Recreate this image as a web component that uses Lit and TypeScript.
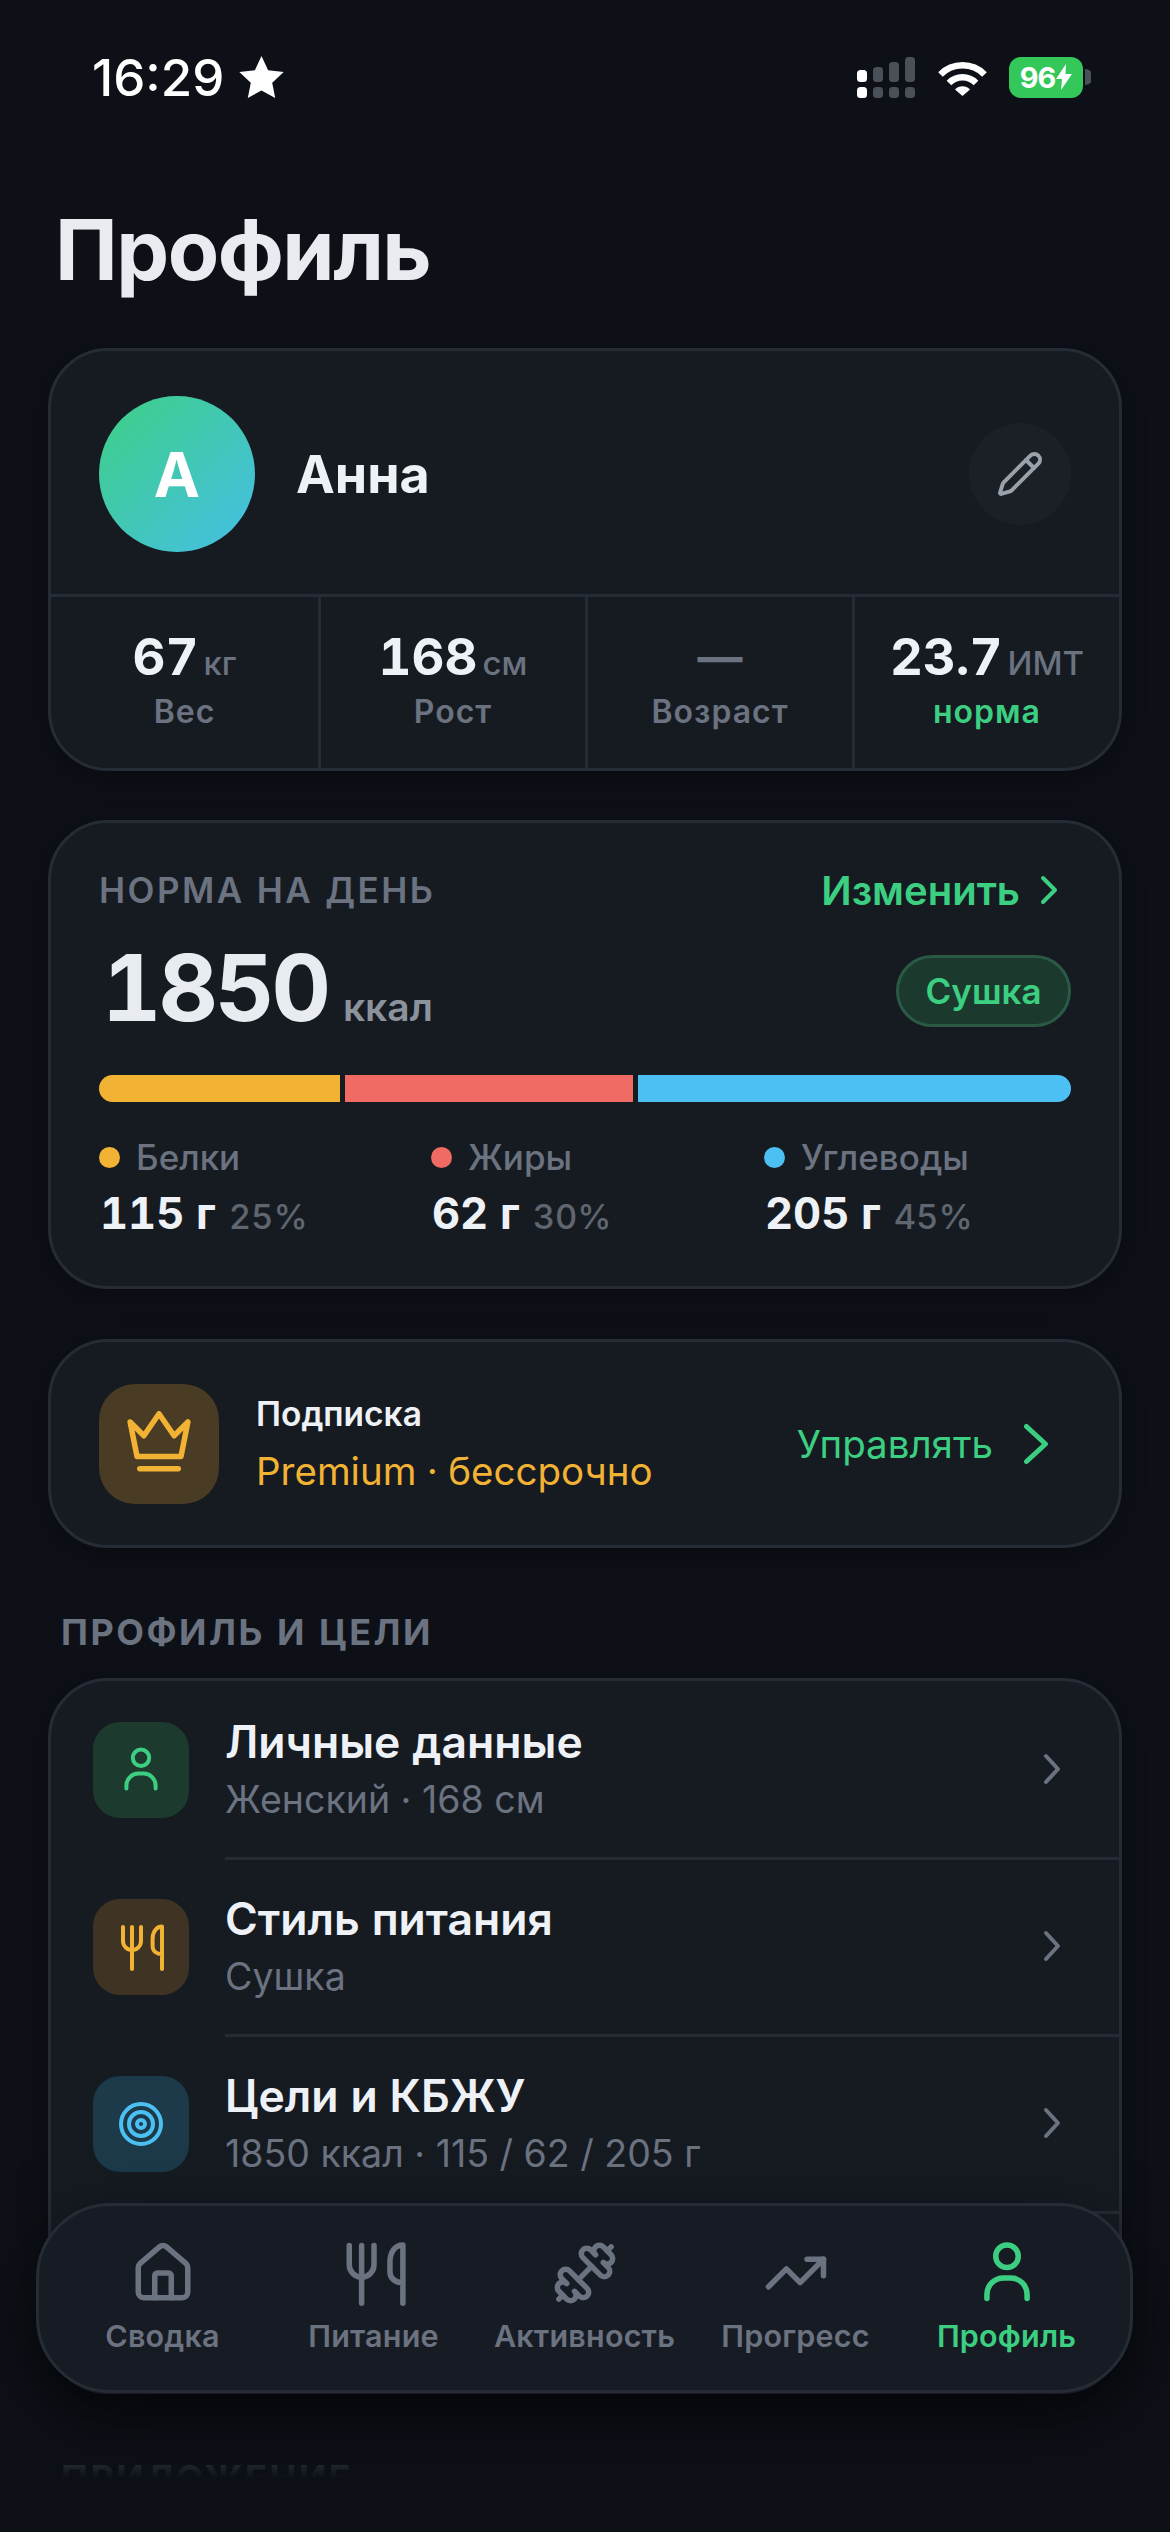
import { LitElement, html, svg, css } from 'lit';
import { customElement } from 'lit/decorators.js';

const stats = [
  { value: '67', unit: 'кг', label: 'Вес' },
  { value: '168', unit: 'см', label: 'Рост' },
  { value: '—', unit: '', label: 'Возраст', empty: true },
  { value: '23.7', unit: 'ИМТ', label: 'норма', good: true },
];

const macros = [
  { name: 'Белки', amount: '115 г', pct: 25, color: '#f2b233' },
  { name: 'Жиры', amount: '62 г', pct: 30, color: '#ef6b64' },
  { name: 'Углеводы', amount: '205 г', pct: 45, color: '#4cc0f2' },
];

const userIcon = svg`<circle cx="12" cy="5.9" r="4.1" /><path d="M4.7 21.3v-1.5a6 6 0 0 1 6-6h2.6a6 6 0 0 1 6 6v1.5" />`;
const foodIcon = svg`<path d="M3 2v7a4.5 4.5 0 0 0 9 0V2" /><path d="M7.5 2v21" /><path d="M22.5 23V1.800c-2.800 0-4.700 2.600-4.700 6.200v3.600c0 2.400 2 3.900 4.700 3.900" />`;
const targetIcon = svg`<circle cx="12" cy="12" r="10" /><circle cx="12" cy="12" r="6" /><circle cx="12" cy="12" r="2" />`;
const homeIcon = svg`<path d="M15 21v-8a1 1 0 0 0-1-1h-4a1 1 0 0 0-1 1v8" /><path d="M3 10a2 2 0 0 1 .709-1.528l7-5.999a2 2 0 0 1 2.582 0l7 5.999A2 2 0 0 1 21 10v9a2 2 0 0 1-2 2H5a2 2 0 0 1-2-2z" />`;
const dumbbellIcon = svg`<g transform="matrix(-1 0 0 1 24 0)"><path d="M14.4 14.4 9.6 9.6" /><path d="M18.657 21.485a2 2 0 1 1-2.829-2.828l-1.767 1.768a2 2 0 1 1-2.829-2.829l6.364-6.364a2 2 0 1 1 2.829 2.829l-1.768 1.767a2 2 0 1 1 2.828 2.829z" /><path d="m21.5 21.5-1.4-1.4" /><path d="M3.9 3.9 2.5 2.5" /><path d="M6.404 12.768a2 2 0 1 1-2.829-2.829l1.768-1.767a2 2 0 1 1-2.828-2.829l2.828-2.828a2 2 0 1 1 2.829 2.828l1.767-1.768a2 2 0 1 1 2.829 2.829z" /></g>`;
const trendIcon = svg`<path d="M22 7 13.5 15.5 8.5 10.5 2 17" /><path d="M16 7h6v6" />`;

const rows = [
  { title: 'Личные данные', sub: 'Женский · 168 см', tone: 'green', icon: userIcon },
  { title: 'Стиль питания', sub: 'Сушка', tone: 'amber', icon: foodIcon },
  { title: 'Цели и КБЖУ', sub: '1850 ккал · 115 / 62 / 205 г', tone: 'blue', icon: targetIcon },
];

const tabs = [
  { label: 'Сводка', icon: homeIcon },
  { label: 'Питание', icon: foodIcon },
  { label: 'Активность', icon: dumbbellIcon },
  { label: 'Прогресс', icon: trendIcon },
  { label: 'Профиль', icon: userIcon, active: true },
];

@customElement('app-root')
export class AppRoot extends LitElement {
  static styles = css`
    :host {
      display: block;
      position: relative;
      width: 1170px;
      height: 2532px;
      overflow: hidden;
      background: #0d1017;
      font-family: Inter, 'Noto Sans', sans-serif;
      font-variant-numeric: tabular-nums;
      color: #eef1f5;
    }
    .ic {
      display: block;
      fill: none;
      stroke: currentColor;
      stroke-width: 2;
      stroke-linecap: round;
      stroke-linejoin: round;
    }

    .status {
      display: flex;
      align-items: center;
      justify-content: space-between;
      height: 154px;
      padding: 0 79px 0 92px;
    }
    .time {
      display: flex;
      align-items: center;
      gap: 14px;
      font-size: 51px;
      font-weight: 500;
      font-variant-numeric: normal;
      color: #fff;
    }
    .indicators {
      display: flex;
      align-items: center;
      gap: 22px;
    }
    .battery {
      display: flex;
      align-items: center;
      gap: 2px;
    }
    .cell {
      display: flex;
      align-items: center;
      justify-content: center;
      gap: 1px;
      width: 74px;
      height: 41px;
      border-radius: 12px;
      background: #34c759;
      font-size: 29px;
      font-weight: 700;
      letter-spacing: -1px;
      color: #fff;
    }

    .content {
      padding: 0 48px;
    }
    h1 {
      margin: 46px 0 48px 7px;
      font-size: 84px;
      line-height: 100px;
      font-weight: 700;
      letter-spacing: -1.5px;
      color: #e8ebf0;
    }
    .card {
      border: 3px solid #262c36;
      border-radius: 60px;
      background: #161b22;
      box-shadow: 0 6px 24px rgba(0, 0, 0, 0.3);
    }

    .who {
      display: flex;
      align-items: center;
      padding: 45px 48px 42px;
      border-bottom: 3px solid #262c36;
    }
    .avatar {
      display: flex;
      align-items: center;
      justify-content: center;
      width: 156px;
      height: 156px;
      border-radius: 50%;
      background: linear-gradient(135deg, #3ecf85, #45bfe6);
      font-size: 62px;
      font-weight: 700;
      color: #fff;
    }
    .name {
      flex: 1;
      margin-left: 41px;
      font-size: 52px;
      font-weight: 700;
    }
    .edit {
      display: flex;
      align-items: center;
      justify-content: center;
      width: 102px;
      height: 102px;
      border-radius: 50%;
      background: #1b2027;
      color: #9aa1aa;
    }
    .stats {
      display: grid;
      grid-template-columns: repeat(4, 1fr);
    }
    .stat {
      display: flex;
      flex-direction: column;
      align-items: center;
      gap: 8px;
      height: 171px;
      padding-top: 33px;
      box-sizing: border-box;
      border-left: 3px solid #262c36;
    }
    .stat:first-child {
      border-left: 0;
    }
    .stat-value {
      display: flex;
      align-items: baseline;
      gap: 5px;
      height: 54px;
      font-size: 51px;
      line-height: 54px;
      font-weight: 700;
    }
    .stat-value.empty {
      font-size: 45px;
      color: #6b7280;
    }
    .stat-unit {
      font-size: 33px;
      font-weight: 500;
      color: #6b7280;
    }
    .stat-label {
      font-size: 32px;
      line-height: 40px;
      font-weight: 600;
      letter-spacing: 1px;
      color: #6b7280;
    }
    .stat-label.good {
      color: #3ccf82;
    }

    .norm {
      margin-top: 49px;
      padding: 42px 48px 48px;
    }
    .norm-head {
      display: flex;
      align-items: center;
      justify-content: space-between;
      height: 50px;
    }
    .caption {
      font-size: 35px;
      line-height: 44px;
      font-weight: 600;
      letter-spacing: 2.5px;
      color: #6b7280;
    }
    .change {
      display: flex;
      align-items: center;
      gap: 20px;
      margin-right: 13px;
      font-size: 40px;
      font-weight: 600;
      color: #3ccf82;
    }
    .kcal-row {
      display: flex;
      align-items: center;
      justify-content: space-between;
      margin-top: 40px;
      height: 72px;
    }
    .kcal {
      display: flex;
      align-items: baseline;
      gap: 15px;
      height: 72px;
      margin: -6px 0 0 3px;
      font-size: 92px;
      line-height: 72px;
      font-weight: 700;
      letter-spacing: -3px;
      color: #e8ebf0;
    }
    .kcal span {
      font-size: 39px;
      font-weight: 600;
      letter-spacing: 0;
      color: #8b929c;
    }
    .pill {
      display: flex;
      align-items: center;
      justify-content: center;
      width: 175px;
      height: 72px;
      box-sizing: border-box;
      border: 3px solid #2a5a45;
      border-radius: 36px;
      background: #1b3a2d;
      font-size: 35px;
      font-weight: 600;
      color: #3ccf82;
    }
    .bar {
      display: flex;
      gap: 5px;
      height: 27px;
      margin-top: 48px;
      border-radius: 14px;
      overflow: hidden;
    }
    .legend {
      display: grid;
      grid-template-columns: 332px 333px 1fr;
      margin-top: 33px;
    }
    .macro-name {
      display: flex;
      align-items: center;
      gap: 16px;
      font-size: 35px;
      line-height: 44px;
      font-weight: 500;
      color: #6b7280;
    }
    .dot {
      width: 21px;
      height: 21px;
      border-radius: 50%;
    }
    .macro-value {
      display: flex;
      align-items: baseline;
      gap: 13px;
      height: 50px;
      margin: 9px 0 0 1px;
      font-size: 43.5px;
      line-height: 50px;
      font-weight: 700;
    }
    .macro-value span {
      font-size: 34.5px;
      font-weight: 500;
      color: #5f6670;
    }

    .sub-card {
      display: flex;
      align-items: center;
      margin-top: 50px;
      padding: 42px 48px 41px;
    }
    .tile {
      display: flex;
      align-items: center;
      justify-content: center;
      flex-shrink: 0;
    }
    .tile.big {
      width: 120px;
      height: 120px;
      border-radius: 36px;
      background: #4a3c24;
      color: #f2b233;
    }
    .sub-text {
      flex: 1;
      margin-left: 37px;
    }
    .sub-title {
      font-size: 33.5px;
      line-height: 44px;
      font-weight: 600;
    }
    .sub-plan {
      margin-top: 10px;
      font-size: 38.5px;
      line-height: 50px;
      color: #f2b233;
    }
    .manage {
      display: flex;
      align-items: center;
      gap: 30px;
      margin-right: 22px;
      font-size: 38.5px;
      font-weight: 400;
      color: #3ccf82;
    }

    .section {
      margin: 62px 0 24px 13px;
      font-size: 36px;
      font-weight: 700;
    }
    .list {
      padding-top: 2px;
    }
    .row {
      display: flex;
      height: 177px;
      padding-left: 42px;
    }
    .tile.small {
      align-self: center;
      width: 96px;
      height: 96px;
      margin-bottom: 3px;
      border-radius: 27px;
    }
    .tile.green {
      background: #1c3a2e;
      color: #3ccf82;
    }
    .tile.amber {
      background: #3f3424;
      color: #f2b233;
    }
    .tile.blue {
      background: #1c3a4a;
      color: #4cc0f2;
    }
    .row-body {
      display: flex;
      align-items: center;
      justify-content: space-between;
      flex: 1;
      margin-left: 36px;
      padding-right: 58px;
      border-bottom: 3px solid #262c36;
    }
    .row-title {
      font-size: 44.5px;
      line-height: 52px;
      font-weight: 600;
    }
    .row-sub {
      margin-top: 8px;
      font-size: 37.5px;
      line-height: 48px;
      font-variant-numeric: normal;
      color: #6b7280;
    }
    .row-arrow {
      margin-bottom: 2px;
      color: #6b7280;
    }

    .fade {
      position: absolute;
      left: 0;
      right: 0;
      bottom: 0;
      height: 112px;
      background: linear-gradient(#0d101700, #0d1017 52%);
    }
    .tabbar {
      position: absolute;
      left: 36px;
      right: 37px;
      bottom: 139px;
      display: grid;
      grid-template-columns: repeat(5, 1fr);
      height: 190px;
      box-sizing: border-box;
      padding: 34px 18px 0;
      border: 3px solid #262c36;
      border-radius: 75px;
      background: #171c24;
      box-shadow: 0 24px 70px rgba(0, 0, 0, 0.55);
    }
    .tab {
      display: flex;
      flex-direction: column;
      align-items: center;
      gap: 10px;
      color: #6b7280;
    }
    .tab.active {
      color: #3ccf82;
    }
    .tab-label {
      font-size: 30.5px;
      line-height: 40px;
      font-weight: 600;
      letter-spacing: 0.2px;
      white-space: nowrap;
    }
  `;

  private chevron(w: number, h: number, sw: number) {
    return html`<svg class="ic" width=${w} height=${h} viewBox="0 0 ${w} ${h}" style="stroke-width:${sw}">
      <path d="M${sw / 2 + 1} ${sw / 2 + 1} L${w - sw / 2 - 1} ${h / 2} L${sw / 2 + 1} ${h - sw / 2 - 1}" />
    </svg>`;
  }

  private renderStatus() {
    return html`
      <div class="status">
        <div class="time">
          16:29
          <svg width="47" height="44" viewBox="0 0 47 44" fill="#fff">
            <path d="M23.5 1l6.6 14.200 15.600 1.900-11.500 10.600 3 15.300-13.700-7.600-13.700 7.600 3-15.300L1.300 17.100l15.600-1.900z" />
          </svg>
        </div>
        <div class="indicators">
          <svg width="59" height="41" viewBox="0 0 59 41">
            <rect x="0" y="13" width="10" height="12" rx="3.5" fill="#fff" />
            <rect x="16" y="10" width="10" height="15" rx="3.5" fill="#4b4f57" />
            <rect x="32" y="5" width="10" height="20" rx="3.5" fill="#4b4f57" />
            <rect x="48" y="0" width="10" height="25" rx="3.5" fill="#4b4f57" />
            <rect x="0" y="30" width="10" height="11" rx="3.5" fill="#fff" />
            <rect x="16" y="30" width="10" height="11" rx="3.5" fill="#4b4f57" />
            <rect x="32" y="30" width="10" height="11" rx="3.5" fill="#4b4f57" />
            <rect x="48" y="30" width="10" height="11" rx="3.5" fill="#4b4f57" />
          </svg>
          <svg width="49" height="37" viewBox="0 0 49 37" fill="none" stroke="#fff" stroke-width="6.5">
            <path d="M2.500 15.500a31 31 0 0 1 44 0" />
            <path d="M11 24a19 19 0 0 1 27 0" />
            <path d="M17 30.500a10.500 10.500 0 0 1 15 0L24.500 37z" fill="#fff" stroke="none" />
          </svg>
          <div class="battery">
            <div class="cell">
              96
              <svg width="16" height="26" viewBox="0 0 16 26" fill="#fff"><path d="M10 0 0 15h6l-1 11L16 10H9.500z" /></svg>
            </div>
            <svg width="6" height="16" viewBox="0 0 6 16" fill="#4b4f57"><path d="M0 0a8 8 0 0 1 0 16z" /></svg>
          </div>
        </div>
      </div>
    `;
  }

  private renderIdentity() {
    return html`
      <section class="card">
        <div class="who">
          <div class="avatar">А</div>
          <div class="name">Анна</div>
          <div class="edit">
            <svg class="ic" width="48" height="48" viewBox="0 0 24 24">
              <path d="M21.174 6.812a1 1 0 0 0-3.986-3.987L3.842 16.174a2 2 0 0 0-.5.83l-1.321 4.352a.5.5 0 0 0 .623.622l4.353-1.32a2 2 0 0 0 .83-.497z" />
              <path d="m15 5 4 4" />
            </svg>
          </div>
        </div>
        <div class="stats">
          ${stats.map(
            (s) => html`
              <div class="stat">
                <div class="stat-value ${s.empty ? 'empty' : ''}">
                  ${s.value}${s.unit ? html`<span class="stat-unit">${s.unit}</span>` : ''}
                </div>
                <div class="stat-label ${s.good ? 'good' : ''}">${s.label}</div>
              </div>
            `,
          )}
        </div>
      </section>
    `;
  }

  private renderNorm() {
    return html`
      <section class="card norm">
        <div class="norm-head">
          <div class="caption">НОРМА НА ДЕНЬ</div>
          <div class="change">Изменить ${this.chevron(18, 30, 4)}</div>
        </div>
        <div class="kcal-row">
          <div class="kcal">1850<span>ккал</span></div>
          <div class="pill">Сушка</div>
        </div>
        <div class="bar">
          ${macros.map((m) => html`<div style="flex:${m.pct};background:${m.color}"></div>`)}
        </div>
        <div class="legend">
          ${macros.map(
            (m) => html`
              <div>
                <div class="macro-name"><i class="dot" style="background:${m.color}"></i>${m.name}</div>
                <div class="macro-value">${m.amount}<span>${m.pct}%</span></div>
              </div>
            `,
          )}
        </div>
      </section>
    `;
  }

  private renderSubscription() {
    return html`
      <section class="card sub-card">
        <div class="tile big">
          <svg class="ic" width="66" height="66" viewBox="0 0 24 24">
            <path d="M1.500 4 6.500 9 12 1l5.500 8 5-5-2.500 12.500H4z" />
            <path d="M5 21h14" />
          </svg>
        </div>
        <div class="sub-text">
          <div class="sub-title">Подписка</div>
          <div class="sub-plan">Premium · бессрочно</div>
        </div>
        <div class="manage">Управлять ${this.chevron(26, 42, 5)}</div>
      </section>
    `;
  }

  private renderList() {
    return html`
      <div class="caption section">ПРОФИЛЬ И ЦЕЛИ</div>
      <section class="card list">
        ${rows.map(
          (r) => html`
            <div class="row">
              <div class="tile small ${r.tone}">
                <svg class="ic" width="48" height="48" viewBox="0 0 24 24">${r.icon}</svg>
              </div>
              <div class="row-body">
                <div>
                  <div class="row-title">${r.title}</div>
                  <div class="row-sub">${r.sub}</div>
                </div>
                <div class="row-arrow">${this.chevron(18, 32, 4)}</div>
              </div>
            </div>
          `,
        )}
        <div class="row"></div>
      </section>
      <div class="caption section">ПРИЛОЖЕНИЕ</div>
    `;
  }

  render() {
    return html`
      ${this.renderStatus()}
      <main class="content">
        <h1>Профиль</h1>
        ${this.renderIdentity()} ${this.renderNorm()} ${this.renderSubscription()} ${this.renderList()}
      </main>
      <div class="fade"></div>
      <nav class="tabbar">
        ${tabs.map(
          (t) => html`
            <div class="tab ${t.active ? 'active' : ''}">
              <svg class="ic" width="66" height="66" viewBox="0 0 24 24">${t.icon}</svg>
              <div class="tab-label">${t.label}</div>
            </div>
          `,
        )}
      </nav>
    `;
  }
}

declare global {
  interface HTMLElementTagNameMap {
    'app-root': AppRoot;
  }
}
